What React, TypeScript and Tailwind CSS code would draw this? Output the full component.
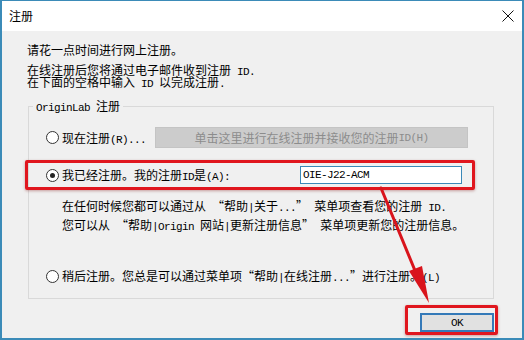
import React from "react";

// latin runs in the dialog use a narrow mono face, like SimSun's half-width glyphs
function L({ children }: { children: React.ReactNode }) {
  return (
    <span className="font-['Liberation_Mono',monospace] text-[11px] leading-[0px] tracking-[-0.6px] whitespace-pre">
      {children}
    </span>
  );
}

function Radio({ checked }: { checked?: boolean }) {
  return (
    <span className="w-[13px] h-[13px] rounded-full border border-[#333] bg-white flex items-center justify-center shrink-0">
      {checked && <span className="w-[5px] h-[5px] rounded-full bg-[#222]" />}
    </span>
  );
}

export default function App() {
  return (
    <div className="relative w-[524px] h-[340px] bg-[#f0f0f0] border-t border-l-2 border-r-2 border-b-2 border-[#3b8bb8] text-[12px] leading-[12px] text-black font-['Noto_Sans_CJK_SC',sans-serif] overflow-hidden">
      {/* TITLE BAR */}
      <div className="h-[30px] bg-white flex items-center justify-between pl-[7px] pr-[8px]">
        <span>注册</span>
        <svg width="12" height="12" viewBox="0 0 12 12">
          <path d="M0.5 0.5 L11.5 11.5 M11.5 0.5 L0.5 11.5" stroke="#111" strokeWidth="1" />
        </svg>
      </div>

      {/* BODY */}
      <div className="pl-[25px] pt-[13px]">
        <p className="h-[12px]">请花一点时间进行网上注册。</p>
        <p className="h-[12px] mt-[8px]">
          在线注册后您将通过电子邮件收到注册<L> ID.</L>
        </p>
        <p className="h-[12px]">
          在下面的空格中输入<L> ID </L>以完成注册<L>.</L>
        </p>

        <fieldset className="ml-px mt-[12px] w-[466px] h-[199px] border border-[#d9d9d9]">
          <legend className="ml-[4px] px-[3px] h-[12px]">
            <L>OriginLab </L>注册
          </legend>

          <div className="pl-[17px] pr-[25px]">
            {/* ROW 1 */}
            <div className="mt-[15px] h-[21px] flex items-center">
              <Radio />
              <span className="ml-[3px]">
                现在注册<L>(R)...</L>
              </span>
              <div className="ml-auto w-[313px] h-[21px] bg-[#cccccc] border border-[#c4c4c4] flex items-center justify-center text-[#8c8c8c]">
                单击这里进行在线注册并接收您的注册<L>ID(H)</L>
              </div>
            </div>

            {/* ROW 2 */}
            <div className="mt-[18px] h-[18px] flex items-center">
              <Radio checked />
              <span className="ml-[3px]">
                我已经注册。我的注册<L>ID</L>是<L>(A):</L>
              </span>
              <div className="ml-auto mr-[6px] w-[162px] h-[18px] bg-white border border-[#3a88b8] flex items-center pl-[2px]">
                <L>OIE-J22-ACM</L>
              </div>
            </div>

            <div className="ml-[16px] mt-[16px] flex flex-col gap-[7px]">
              <p className="h-[12px]">
                在任何时候您都可以通过从<L> </L>“帮助<L>|</L>关于<L>...</L>”<L> </L>菜单项查看您的注册<L> ID.</L>
              </p>
              <p className="h-[12px]">
                您可以从<L> </L>“帮助<L>|Origin </L>网站<L>|</L>更新注册信息”<L> </L>菜单项更新您的注册信息。
              </p>
            </div>

            {/* ROW 3 */}
            <div className="mt-[37px] h-[16px] flex items-center">
              <Radio />
              <span className="ml-[3px]">
                稍后注册。您总是可以通过菜单项“帮助<L>|</L>在线注册<L>...</L>”进行注册。<L>(L)</L>
              </span>
            </div>
          </div>
        </fieldset>
      </div>

      {/* OK */}
      <div className="flex justify-end pr-[28px] mt-[14px]">
        <button className="w-[74px] h-[19px] bg-[#e1e1e1] border-2 border-[#3479b8] flex items-center justify-center">
          <L>OK</L>
        </button>
      </div>

      {/* RED ANNOTATIONS */}
      <div className="absolute left-[23px] top-[159px] w-[450px] h-[30px] border-[3px] border-[#e0161e] rounded-[2px] shadow-[0_1px_3px_rgba(120,0,0,0.35)] pointer-events-none" />
      <div className="absolute left-[403px] top-[304px] w-[93px] h-[30px] border-[3px] border-[#e0161e] rounded-[2px] shadow-[0_1px_3px_rgba(120,0,0,0.35)] pointer-events-none" />
      <svg className="absolute left-0 top-0 pointer-events-none" width="524" height="340" viewBox="0 0 524 340">
        <line x1="379" y1="187" x2="414" y2="272" stroke="#d9141c" strokeWidth="3" strokeLinecap="round" />
        <polygon points="427,302 407,270 420,265" fill="#d9141c" />
      </svg>
    </div>
  );
}
